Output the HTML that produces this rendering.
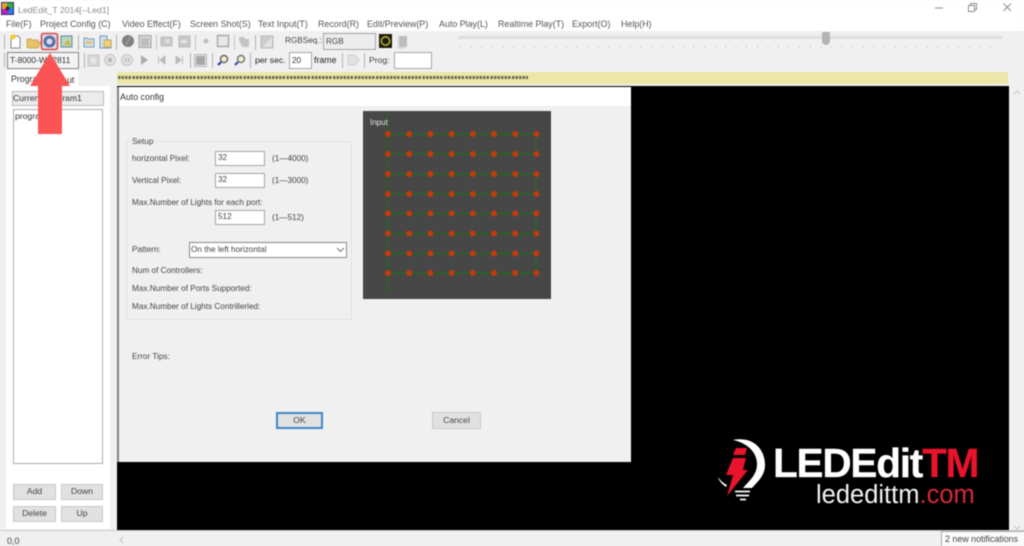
<!DOCTYPE html>
<html><head><meta charset="utf-8"><style>
html,body{margin:0;padding:0;background:#f0f0f0}
#p{position:relative;width:1024px;height:546px;overflow:hidden;background:#f0f0f0;font:8.2px "Liberation Sans",sans-serif;color:#333;filter:blur(.4px)}
#p div{position:absolute;white-space:nowrap}
.t{line-height:12px}
.m{line-height:12px;font-size:8.9px;color:#555;top:18px}
.in{background:#fff;border:1px solid #a5a5a5;box-sizing:border-box;line-height:12px;padding-left:2px}
.b{background:#e1e1e1;border:1px solid #c8c8c8;box-sizing:border-box;text-align:center;line-height:13px;color:#444;font-size:8.6px}
</style></head><body><div id="p">
<div style="left:0;top:0;width:1024px;height:31px;background:#fff"></div>
<svg style="position:absolute;left:1px;top:2px" width="13" height="13" viewBox="0 0 13 13"><rect width="13" height="13" fill="#3a2a70"/><rect x="1" y="1" width="6" height="6" fill="#f0a020"/><rect x="6" y="1" width="6" height="6" fill="#30b040"/><rect x="1" y="7" width="6" height="5" fill="#c020c0"/><rect x="7" y="6" width="5" height="6" fill="#2080e0"/><circle cx="6.500" cy="6.500" r="2" fill="#402050"/></svg>
<div class="t" style="left:18px;top:4px;color:#8a8a8a;font-size:8.7px">LedEdit_T 2014[--Led1]</div>
<svg style="position:absolute;left:930px;top:0" width="94" height="16" viewBox="0 0 94 16" fill="none" stroke="#8c8c8c"><path d="M5 8H13"/><path d="M38.500 5.500h6v6h-6zM40.500 5.500v-2h6v6h-2"/><path d="M73.500 3.500l7.500 7.500M81 3.500l-7.500 7.500"/></svg>
<div class="m" style="left:6px">File(F)</div>
<div class="m" style="left:40px">Project Config (C)</div>
<div class="m" style="left:122px">Video Effect(F)</div>
<div class="m" style="left:190px">Screen Shot(S)</div>
<div class="m" style="left:258px">Text Input(T)</div>
<div class="m" style="left:318px">Record(R)</div>
<div class="m" style="left:367px">Edit/Preview(P)</div>
<div class="m" style="left:439px">Auto Play(L)</div>
<div class="m" style="left:498px">Realtime Play(T)</div>
<div class="m" style="left:572px">Export(O)</div>
<div class="m" style="left:621px">Help(H)</div>

<svg style="position:absolute;left:0;top:31px" width="440" height="40" viewBox="0 31 440 40">
<g fill="#b0b0b0"><rect x="4" y="35" width="1" height="14"/><rect x="4" y="53" width="1" height="14"/></g>
<path d="M11 36h7l2 2v10h-9z" fill="#fff" stroke="#888"/><circle cx="13" cy="37" r="2.500" fill="#f2d020"/>
<path d="M27 47v-8h4l1 1h6v2h3l-3 6h-10z" fill="#e8c468" stroke="#b89848" stroke-width=".7"/>
<rect x="41.500" y="33.500" width="16" height="16" rx="2" fill="#d9dce8" stroke="#e04848" stroke-width="1.600"/><circle cx="49.500" cy="41.500" r="4.500" fill="none" stroke="#5570a8" stroke-width="3"/>
<rect x="61" y="36" width="11" height="11" fill="#b8d8c0" stroke="#60889a"/><path d="M64 45l4-6 3 6z" fill="#d8b040"/>
<rect x="78" y="35" width="1" height="15" fill="#b0b0b0"/>
<path d="M84 38h3l1 1h6v8H84z" fill="#cfe0ee" stroke="#7a9ab8"/><rect x="86" y="41" width="6" height="3" fill="#e8c468"/>
<path d="M100 36h7v4h4v8h-11z" fill="#cfe0ee" stroke="#7a9ab8"/><rect x="104" y="40" width="7" height="7" fill="#f0d070" stroke="#b89848" stroke-width=".6"/>
<rect x="116" y="35" width="1" height="15" fill="#b0b0b0"/>
<circle cx="128" cy="41" r="6" fill="#808080"/><path d="M126 45l4-8" stroke="#aaa"/>
<rect x="139" y="35.500" width="12" height="12" fill="#d8d8d8" stroke="#a0a0a0"/><rect x="141" y="38" width="8" height="8" fill="#bcbcbc"/>
<rect x="156" y="35" width="1" height="15" fill="#c4c4c4"/>
<rect x="161" y="37" width="11" height="9" rx="1" fill="#c8c8c8" stroke="#bbb"/><rect x="165" y="39" width="5" height="4" fill="#ddd"/>
<rect x="179" y="36" width="11" height="11" fill="#c8c8c8" stroke="#bbb"/><path d="M181 40h6v3h-6z" fill="#e4e4e4"/>
<rect x="195" y="35" width="1" height="15" fill="#c4c4c4"/>
<circle cx="206" cy="41" r="2.500" fill="#c0c0c0"/>
<rect x="217.500" y="35.500" width="11" height="11" fill="#e8e8e8" stroke="#aaa" stroke-width="1.500"/>
<rect x="234" y="35" width="1" height="15" fill="#c4c4c4"/>
<path d="M239 37h5l1 2h4v8h-7l-3-7z" fill="#c4c4c4"/>
<rect x="255" y="35" width="1" height="15" fill="#b0b0b0"/>
<rect x="261" y="36" width="12" height="12" fill="#cccccc" stroke="#bbb"/><path d="M262 47l10-10v10z" fill="#e2e2e2"/>
<rect x="379" y="34" width="13" height="14" fill="#1c1c10"/><circle cx="385.500" cy="41" r="4.200" fill="none" stroke="#d4c830" stroke-width="1.300"/>
<rect x="399" y="36" width="8" height="11" fill="#bcbcbc"/><path d="M399 36l-1 1v11h7" fill="none" stroke="#d4d4d4"/>
<rect x="84" y="53" width="1" height="15" fill="#b0b0b0"/>
<rect x="88" y="55" width="11" height="11" fill="#d8d8d8" stroke="#c4c4c4"/><rect x="91" y="58" width="5" height="5" fill="#e6e6e6"/>
<circle cx="110" cy="60" r="5.500" fill="#e2e2e2" stroke="#c4c4c4"/><rect x="108" y="58" width="4" height="4" fill="#b8b8b8"/>
<circle cx="127" cy="60" r="5.500" fill="#e2e2e2" stroke="#c4c4c4"/><path d="M125.500 58v4M128.500 58v4" stroke="#aaa"/>
<path d="M141 55l7 5-7 5z" fill="#acacac"/>
<path d="M158.500 56v8M165 56l-5 4 5 4z" fill="#bbb" stroke="#bbb"/>
<path d="M182.500 56v8M176 56l5 4-5 4z" fill="#bbb" stroke="#bbb"/>
<rect x="190" y="53" width="1" height="15" fill="#b0b0b0"/>
<rect x="194.500" y="54.500" width="12" height="12" fill="#e4e4e4" stroke="#bbb"/><rect x="196" y="56" width="9" height="9" fill="#a8a8a8"/>
<rect x="212" y="53" width="1" height="15" fill="#b0b0b0"/>
<circle cx="224" cy="59" r="3.500" fill="#f0ecd8" stroke="#665" stroke-width="1.400"/><path d="M221 62l-3 3" stroke="#2438b0" stroke-width="2"/>
<circle cx="241" cy="59" r="3.500" fill="#f0ecd8" stroke="#776" stroke-width="1.400"/><path d="M238 62l-3 3" stroke="#3048b0" stroke-width="2"/>
<rect x="250" y="53" width="1" height="15" fill="#b0b0b0"/>
<rect x="342" y="53" width="1" height="15" fill="#b0b0b0"/>
<path d="M348 55h7l4 5-4 5h-7z" fill="#e0e0e0" stroke="#d0d0d0"/>
<rect x="364" y="53" width="1" height="15" fill="#b0b0b0"/>
</svg>
<div class="t" style="left:285px;top:35px;color:#444">RGBSeq.:</div>
<div class="in" style="left:323px;top:33px;width:53px;height:17px;line-height:15px;background:#ededed;color:#444">RGB</div>
<div class="in" style="left:7px;top:52px;width:72px;height:17px;line-height:15px;font-size:8.4px;background:#f4f4f4;color:#333;border-color:#888">T-8000-WS2811</div>
<div class="t" style="left:255px;top:54px;color:#222;font-size:8.6px">per sec.</div>
<div class="in" style="left:289px;top:52px;width:23px;height:17px;line-height:15px;color:#333">20</div>
<div class="t" style="left:314px;top:54px;color:#222;font-size:8.8px">frame</div>
<div class="t" style="left:369px;top:54px;color:#444;font-size:8.6px">Prog:</div>
<div class="in" style="left:394px;top:52px;width:38px;height:17px"></div>
<div style="left:458px;top:36px;width:544px;height:3px;background:#dfdfdf"></div>
<div style="left:822px;top:32px;width:8px;height:13px;background:#b4b4b4;border-radius:1px 1px 4px 4px"></div>
<div style="left:460px;top:46px;width:540px;height:3px;background:repeating-linear-gradient(90deg,#d4d4d4 0 1px,transparent 1px 10.600px)"></div>

<div style="left:6px;top:70px;width:72px;height:17px;background:#fff"></div>
<div class="t" style="left:11px;top:73px;color:#333;font-size:8.8px">Program</div>
<div class="t" style="left:67px;top:74px;color:#333;font-size:8.8px">ut</div>
<div style="left:6px;top:86px;width:104px;height:443px;background:#fff"></div>
<div class="b" style="left:12px;top:91px;width:92px;height:15px;text-align:left;background:#ececec;color:#333;border-color:#bbb">Current Program1</div>
<div style="left:13px;top:109px;width:90px;height:355px;background:#fff;border:1px solid #adadad;box-sizing:border-box"></div>
<div class="t" style="left:15px;top:110px;color:#333;font-size:8.6px">program1</div>
<div class="b" style="left:13px;top:484px;width:43px;height:16px">Add</div>
<div class="b" style="left:61px;top:484px;width:42px;height:16px">Down</div>
<div class="b" style="left:13px;top:506px;width:43px;height:16px">Delete</div>
<div class="b" style="left:61px;top:506px;width:42px;height:16px">Up</div>

<div style="left:117px;top:72px;width:891px;height:12px;background:#ece6a8"></div>
<div style="left:118px;top:76px;width:410px;height:3px;background:repeating-linear-gradient(90deg,#6c6c50 0 2.500px,transparent 2.500px 3.580px)"></div>
<div style="left:117px;top:86px;width:892px;height:444px;background:#000"></div>
<div style="left:117px;top:87px;width:514px;height:375px;background:#f0f0f0;border-left:2px solid #808080;box-sizing:border-box"></div>
<div style="left:119px;top:87px;width:512px;height:19px;background:#fff"></div>
<div class="t" style="left:120px;top:91px;color:#333;font-size:8.8px">Auto config</div>

<div style="left:126px;top:141px;width:226px;height:179px;border:1px solid #e0e0e0;box-sizing:border-box"></div>
<div class="t" style="left:130px;top:136px;background:#f0f0f0;padding:0 2px;color:#444">Setup</div>
<div class="t" style="left:132px;top:153px;color:#444">horizontal Pixel:</div>
<div class="in" style="left:215px;top:151px;width:50px;height:15px;color:#444">32</div>
<div class="t" style="left:272px;top:153px;color:#444">(1—4000)</div>
<div class="t" style="left:132px;top:175px;color:#444">Vertical Pixel:</div>
<div class="in" style="left:215px;top:173px;width:50px;height:15px;color:#444">32</div>
<div class="t" style="left:272px;top:175px;color:#444">(1—3000)</div>
<div class="t" style="left:132px;top:197px;color:#444">Max.Number of Lights for each port:</div>
<div class="in" style="left:215px;top:210px;width:50px;height:15px;color:#444">512</div>
<div class="t" style="left:272px;top:212px;color:#444">(1—512)</div>
<div class="t" style="left:132px;top:244px;color:#444">Pattern:</div>
<div class="in" style="left:189px;top:242px;width:158px;height:16px;color:#444;border-color:#888;line-height:13px;padding-left:1px">On the left horizontal</div>
<svg style="position:absolute;left:336px;top:247px" width="9" height="6" fill="none" stroke="#777"><path d="M1 1l3.500 3.500L8 1"/></svg>
<div class="t" style="left:132px;top:265px;color:#444">Num of Controllers:</div>
<div class="t" style="left:132px;top:283px;color:#444">Max.Number of Ports Supported:</div>
<div class="t" style="left:132px;top:301px;color:#444">Max.Number of Lights Contrillerled:</div>
<div class="t" style="left:132px;top:351px;color:#444">Error Tips:</div>
<div class="b" style="left:276px;top:412px;width:47px;height:17px;border:2px solid #3a86c8;line-height:13px">OK</div>
<div class="b" style="left:432px;top:412px;width:49px;height:17px;line-height:15px">Cancel</div>

<div style="left:363px;top:111px;width:188px;height:188px;background:#474747"></div>
<svg style="position:absolute;left:363px;top:111px" width="188" height="188" viewBox="363 111 188 188">
<path d="M388 112V292M388 134H536V154H388V174H536V194H388V213.500H536V233.500H388V253.500H536V273H388" fill="none" stroke="#2a6226" stroke-width="1.800"/>
<g fill="#c23a0e">
<circle cx="388" cy="134" r="3"/><circle cx="409.200" cy="134" r="3"/><circle cx="430.400" cy="134" r="3"/><circle cx="451.600" cy="134" r="3"/><circle cx="472.800" cy="134" r="3"/><circle cx="494" cy="134" r="3"/><circle cx="515.200" cy="134" r="3"/><circle cx="536.400" cy="134" r="3"/>
<circle cx="388" cy="154" r="3"/><circle cx="409.200" cy="154" r="3"/><circle cx="430.400" cy="154" r="3"/><circle cx="451.600" cy="154" r="3"/><circle cx="472.800" cy="154" r="3"/><circle cx="494" cy="154" r="3"/><circle cx="515.200" cy="154" r="3"/><circle cx="536.400" cy="154" r="3"/>
<circle cx="388" cy="174" r="3"/><circle cx="409.200" cy="174" r="3"/><circle cx="430.400" cy="174" r="3"/><circle cx="451.600" cy="174" r="3"/><circle cx="472.800" cy="174" r="3"/><circle cx="494" cy="174" r="3"/><circle cx="515.200" cy="174" r="3"/><circle cx="536.400" cy="174" r="3"/>
<circle cx="388" cy="194" r="3"/><circle cx="409.200" cy="194" r="3"/><circle cx="430.400" cy="194" r="3"/><circle cx="451.600" cy="194" r="3"/><circle cx="472.800" cy="194" r="3"/><circle cx="494" cy="194" r="3"/><circle cx="515.200" cy="194" r="3"/><circle cx="536.400" cy="194" r="3"/>
<circle cx="388" cy="213.500" r="3"/><circle cx="409.200" cy="213.500" r="3"/><circle cx="430.400" cy="213.500" r="3"/><circle cx="451.600" cy="213.500" r="3"/><circle cx="472.800" cy="213.500" r="3"/><circle cx="494" cy="213.500" r="3"/><circle cx="515.200" cy="213.500" r="3"/><circle cx="536.400" cy="213.500" r="3"/>
<circle cx="388" cy="233.500" r="3"/><circle cx="409.200" cy="233.500" r="3"/><circle cx="430.400" cy="233.500" r="3"/><circle cx="451.600" cy="233.500" r="3"/><circle cx="472.800" cy="233.500" r="3"/><circle cx="494" cy="233.500" r="3"/><circle cx="515.200" cy="233.500" r="3"/><circle cx="536.400" cy="233.500" r="3"/>
<circle cx="388" cy="253.500" r="3"/><circle cx="409.200" cy="253.500" r="3"/><circle cx="430.400" cy="253.500" r="3"/><circle cx="451.600" cy="253.500" r="3"/><circle cx="472.800" cy="253.500" r="3"/><circle cx="494" cy="253.500" r="3"/><circle cx="515.200" cy="253.500" r="3"/><circle cx="536.400" cy="253.500" r="3"/>
<circle cx="388" cy="273" r="3"/><circle cx="409.200" cy="273" r="3"/><circle cx="430.400" cy="273" r="3"/><circle cx="451.600" cy="273" r="3"/><circle cx="472.800" cy="273" r="3"/><circle cx="494" cy="273" r="3"/><circle cx="515.200" cy="273" r="3"/><circle cx="536.400" cy="273" r="3"/>
</g></svg>
<div class="t" style="left:370px;top:117px;color:#e4e4e4;font-size:8px">Input</div>

<svg style="position:absolute;left:0;top:0" width="80" height="140" viewBox="0 0 80 140"><path d="M50 53L70 86H62V134H38V86H30z" fill="#fb5454"/></svg>

<svg style="position:absolute;left:715px;top:435px" width="70" height="70" viewBox="0 0 70 70">
<path d="M18 5C38 1 50 14 50 30C50 41 42 47 37 53H28C34 46 42 40 42 29C42 17 32 8 18 5z" fill="#fff"/>
<path d="M3 42c2 3 5 6 9 8l-1 2C7 49 4 46 3 42z" fill="#fff"/>
<path d="M20 56.500H35M21 60.500H34M25 64.500H31" stroke="#fff" stroke-width="1.800"/>
<path d="M21 13H32L30 20H18zM18 23H31L28 35H33L12 61L18 40H11z" fill="#e8132c"/>
</svg>
<div class="t" style="left:773px;top:441px;font:bold 40.500px/44px 'Liberation Sans',sans-serif;color:#fff;letter-spacing:-1.200px;-webkit-text-stroke:.3px currentColor">LEDEdit<span style="color:#e8132c">TM</span></div>
<div class="t" style="left:816px;top:481px;font:25.500px/28px 'Liberation Sans',sans-serif;color:#f2f2f2">lededittm<span style="color:#d8283c">.com</span></div>

<div style="left:1009px;top:86px;width:15px;height:444px;background:#f0f0f0"></div>
<svg style="position:absolute;left:1012px;top:88px" width="10" height="442" fill="none" stroke="#c4c4c4"><path d="M2 6l3-3 3 3M2 438l3 3 3-3"/></svg>
<svg style="position:absolute;left:118px;top:535px" width="8" height="10" fill="none" stroke="#c4c4c4"><path d="M5 2L2 5l3 3"/></svg>
<div style="left:0;top:530px;width:1024px;height:1px;background:#c8c8c8"></div>
<div class="t" style="left:7px;top:535px;color:#444;font-size:9px">0,0</div>
<div style="left:941px;top:531px;width:83px;height:15px;background:#fbfbfb;border:1px solid #aaa;border-right:0;border-bottom:0;box-sizing:border-box"></div>
<div class="t" style="left:945px;top:533px;color:#444;font-size:8.9px">2 new notifications</div>
</div></body></html>
